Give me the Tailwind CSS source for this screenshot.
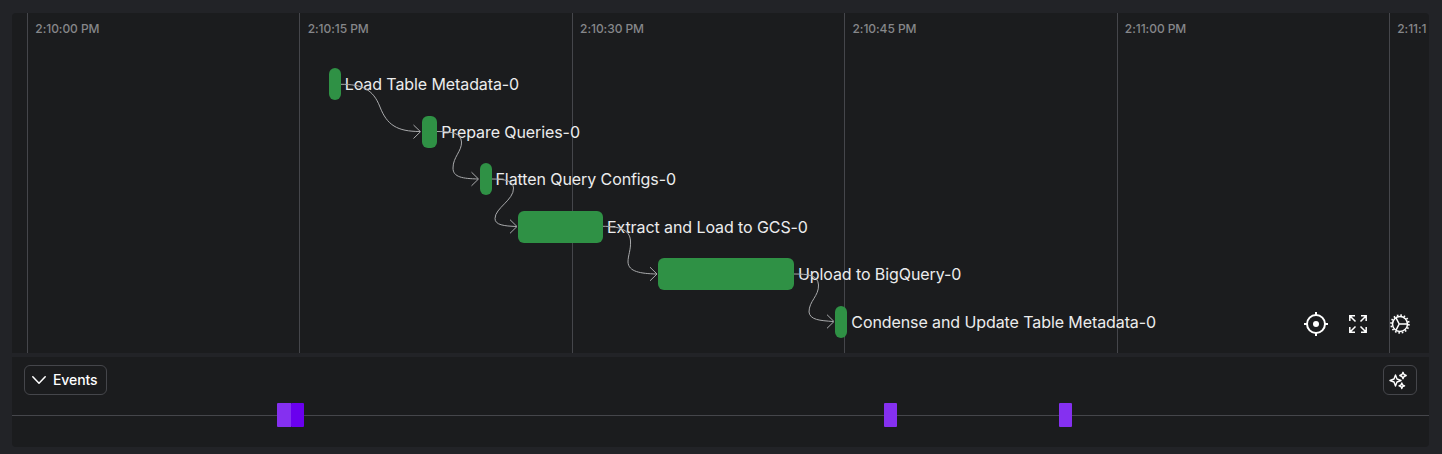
<!DOCTYPE html>
<html lang="en">
<head>
<meta charset="utf-8">
<title>Run timeline</title>
<script src="https://cdn.jsdelivr.net/npm/@tailwindcss/browser@4"></script>
</head>
<body class="h-[454px] w-[1442px] overflow-hidden bg-[#222327] pt-[13px] pl-3 font-['Inter',sans-serif]">
<main class="flex w-[1417px] flex-col gap-1">
  <section class="relative h-[340px] overflow-hidden rounded-t bg-[#1b1c1e]">
    <div class="flex h-full pl-[15px] text-[12px] leading-[16px] font-medium tracking-[-0.06px] whitespace-nowrap text-[#86878a]">
      <div class="w-[272.4px] shrink-0 border-l border-[#45464b] pt-2 pl-[7.300px]">2:10:00 PM</div>
      <div class="w-[272.4px] shrink-0 border-l border-[#45464b] pt-2 pl-[7.300px]">2:10:15 PM</div>
      <div class="w-[272.4px] shrink-0 border-l border-[#45464b] pt-2 pl-[7.300px]">2:10:30 PM</div>
      <div class="w-[272.4px] shrink-0 border-l border-[#45464b] pt-2 pl-[7.300px]">2:10:45 PM</div>
      <div class="w-[272.4px] shrink-0 border-l border-[#45464b] pt-2 pl-[7.300px]">2:11:00 PM</div>
      <div class="min-w-0 flex-1 border-l border-[#45464b] pt-2 pl-[7.300px]">2:11:1</div>
    </div>
    <div class="absolute inset-0 pt-[47.6px] text-[16px] leading-6 tracking-[-0.09px] whitespace-nowrap text-[#ececed]">
      <div class="flex h-[47.45px] items-center gap-1 pl-[316.7px]"><i class="h-8 w-[12px] rounded-[6px] bg-[#2f9145]"></i><span>Load Table Metadata-0</span></div>
      <div class="flex h-[47.45px] items-center gap-1 pl-[409.7px]"><i class="h-8 w-[15.5px] rounded-[6px] bg-[#2f9145]"></i><span>Prepare Queries-0</span></div>
      <div class="flex h-[47.45px] items-center gap-1 pl-[467.5px]"><i class="h-8 w-[12px] rounded-[6px] bg-[#2f9145]"></i><span>Flatten Query Configs-0</span></div>
      <div class="flex h-[47.45px] items-center gap-1 pl-[506.3px]"><i class="h-8 w-[84.7px] rounded-[6px] bg-[#2f9145]"></i><span>Extract and Load to GCS-0</span></div>
      <div class="flex h-[47.45px] items-center gap-1 pl-[646.2px]"><i class="h-8 w-[135.8px] rounded-[6px] bg-[#2f9145]"></i><span>Upload to BigQuery-0</span></div>
      <div class="flex h-[47.45px] items-center gap-1 pl-[823.3px]"><i class="h-8 w-[12px] rounded-[6px] bg-[#2f9145]"></i><span>Condense and Update Table Metadata-0</span></div>
    </div>
    <svg class="absolute inset-0" width="1417" height="340" viewBox="12 13 1417 340" fill="none" stroke="#a9aaac" stroke-width="1">
      <path d="M341 84.3C362 84.3 373 89 380 107S397 131.5 420 131.5M413.500 125L420.500 131.700L413.500 138.500"/>
      <path d="M437 131.500C452 131.500 461 133 461.500 142C462 151 453 157 453 168C453 177.500 463 178.500 478 179M471.500 172.200L478.500 179L471.500 185.800"/>
      <path d="M492 179C506 179 513 181 513.500 188C514 200 495 208 495 218.500C495 225 504 226 516.500 226.500M510 219.700L517 226.500L510 233.300"/>
      <path d="M603 226.300C618 226.300 630 229 630.500 241C631 250 628 255 628 262C628.500 272 641 273.500 656 274M650 267.200L657 274L650 280.800"/>
      <path d="M794 274C808 274 818 275 818.500 285C819 296 809 301 809 312C810 320 820 320.500 833 321.500M827 314.700L834 321.500L827 328.300"/>
    </svg>
    <div class="absolute right-[17px] bottom-[17px] flex items-center gap-[18px] text-white">
      <svg width="24" height="24" viewBox="0 0 24 24" fill="none" stroke="currentColor" stroke-width="2"><circle cx="12" cy="12" r="9"/><circle cx="12" cy="12" r="3" fill="currentColor" stroke="none"/><path d="M12 0v4M12 20v4M0 12h4M20 12h4"/></svg>
      <svg width="24" height="24" viewBox="0 0 24 24" fill="none" stroke="currentColor" stroke-width="1.500"><path d="M3.800 9V3.800H9M4 4l5.500 5.500M15 3.800h5.200V9M20 4l-5.500 5.500M3.800 15v5.200H9M4 20l5.500-5.500M20.200 15v5.200H15M20 20l-5.500-5.500"/></svg>
      <svg width="24" height="24" viewBox="0 0 24 24" fill="none" stroke="currentColor" stroke-width="1.500"><circle cx="12" cy="12" r="7.500"/><circle cx="12" cy="12" r="8.900" stroke-width="1.700" stroke-dasharray="1.600 1.900"/><path d="M11 12h8.500M11.200 12L8 5.800M11.200 12L8 18.200"/></svg>
    </div>
  </section>
  <section class="h-[90px] rounded-b bg-[#1b1c1e]">
    <div class="flex h-[46px] items-start justify-between px-3 pt-2 text-white">
      <button class="flex h-[30px] w-[83px] items-center gap-[7px] rounded-[6px] border border-[#45464b] pl-[7px] text-[14px] leading-5 font-medium tracking-[-0.1px]">
        <svg width="14" height="14" viewBox="0 0 14 14" fill="none" stroke="currentColor" stroke-width="1.500" stroke-linecap="round" stroke-linejoin="round"><path d="M.8 3.700L7 10.300l6.200-6.600"/></svg><span>Events</span>
      </button>
      <button class="flex h-[30px] w-[34px] items-center rounded-[6px] border border-[#45464b] pl-[5px]" aria-label="Suggestions">
        <svg width="20" height="20" viewBox="0 0 20 20" fill="none" stroke="currentColor" stroke-width="1.400" stroke-linejoin="round"><path d="M6.500 5L8 9L12 10.500L8 12L6.500 16L5 12L1 10.500L5 9ZM14 2.300L15 4.500L17.200 5.500L15 6.500L14 8.700L13 6.500L10.800 5.500L13 4.500ZM12.800 13L13.600 15L15.600 15.800L13.600 16.600L12.800 18.600L12 16.600L10 15.800L12 15Z"/></svg>
      </button>
    </div>
    <div class="flex h-6 items-center">
      <div class="h-px w-[265px] bg-[#45464b]"></div>
      <div class="h-6 w-[14px] rounded-l-[1px] bg-[#8530f0]"></div>
      <div class="h-6 w-[13px] rounded-[1px] bg-[#6a00ee]"></div>
      <div class="h-px w-[580px] bg-[#45464b]"></div>
      <div class="h-6 w-[13px] rounded-[1px] bg-[#8530f0]"></div>
      <div class="h-px w-[162px] bg-[#45464b]"></div>
      <div class="h-6 w-[13px] rounded-[1px] bg-[#8530f0]"></div>
      <div class="h-px flex-1 bg-[#45464b]"></div>
    </div>
  </section>
</main>
</body>
</html>
